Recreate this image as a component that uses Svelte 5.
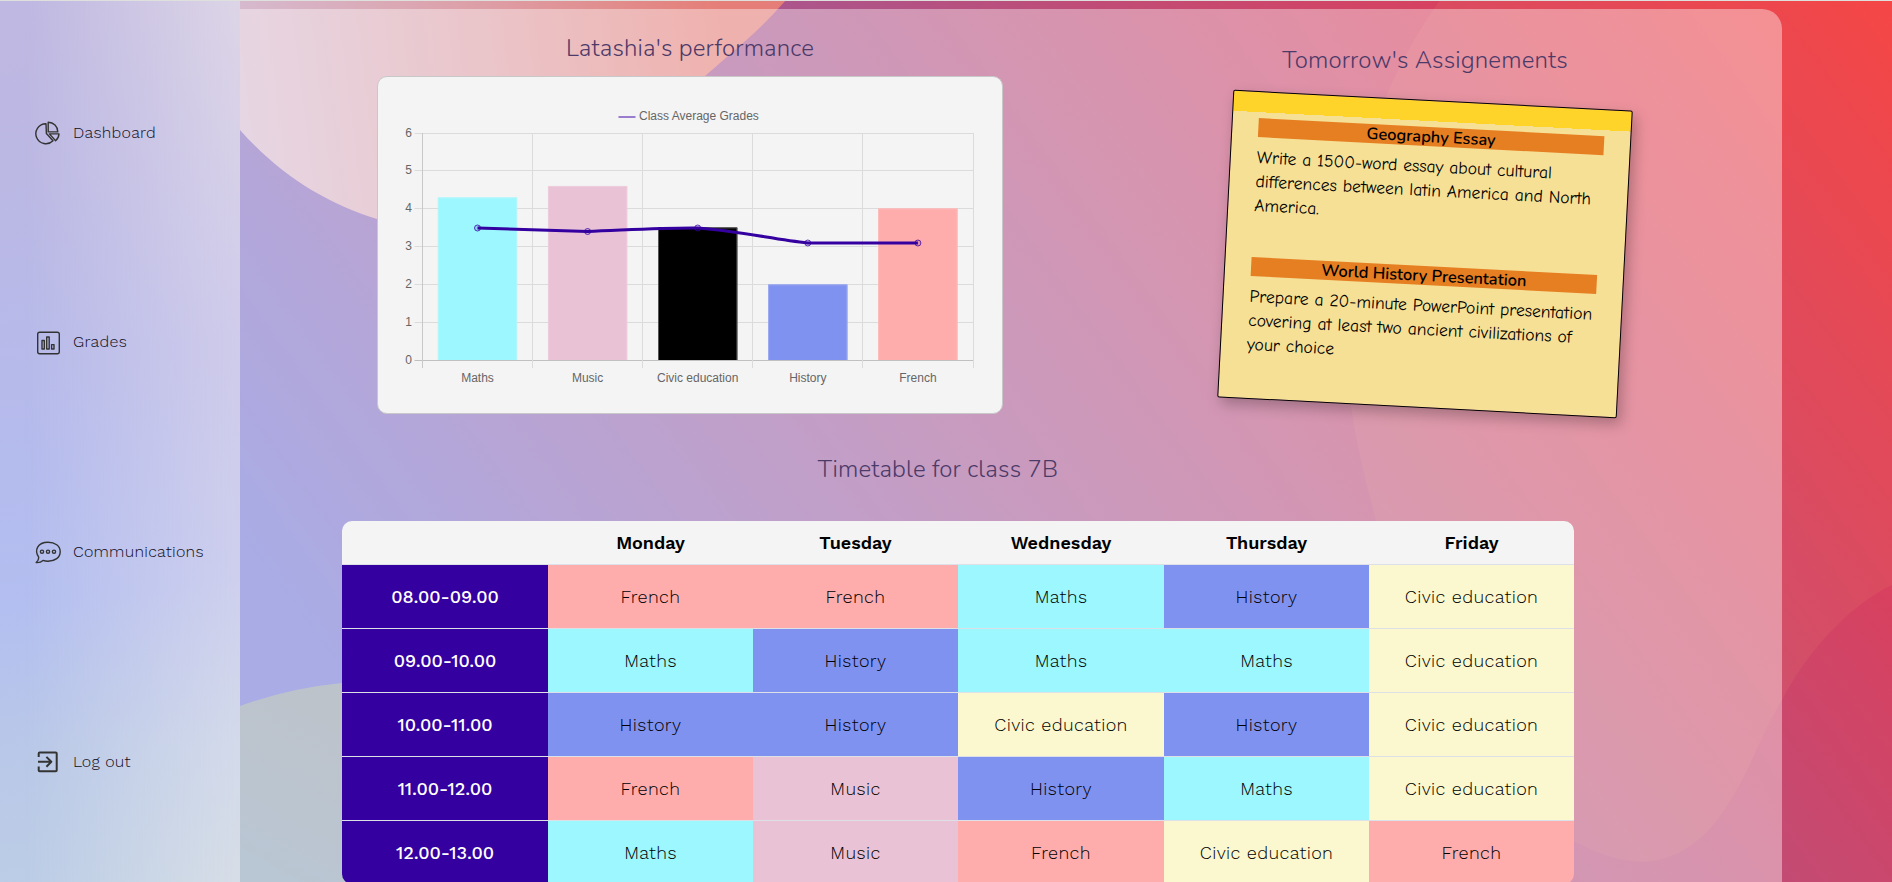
<script>
  const subjects = {
    F: ['French', 'french'],
    M: ['Maths', 'maths'],
    H: ['History', 'history'],
    C: ['Civic education', 'civic'],
    U: ['Music', 'music']
  };
  const days = ['Monday', 'Tuesday', 'Wednesday', 'Thursday', 'Friday'];
  const rows = [
    ['08.00-09.00', 'FFMHC'],
    ['09.00-10.00', 'MHMMC'],
    ['10.00-11.00', 'HHCHC'],
    ['11.00-12.00', 'FUHMC'],
    ['12.00-13.00', 'MUFCF']
  ];
  const menu = [
    ['pie', 'Dashboard'],
    ['bars', 'Grades'],
    ['chat', 'Communications'],
    ['exit', 'Log out']
  ];
  const gridY = [56.5, 93.5, 131.5, 169.5, 207.5, 245.5, 283.5];
  const gridX = [43.5, 153.5, 263.5, 373.5, 483.5, 594.5];
  const bars = [
    ['Maths', 120.5, '#9cf7ff', '#b5f5fb'],
    ['Music', 109, '#e9c3d5', '#edcedc'],
    ['Civic education', 150.5, '#000', '#555'],
    ['History', 207.5, '#8092f0', '#9ba9f1'],
    ['French', 131.5, '#ffacac', '#fcbcbc']
  ];
  const avg = [151, 154.5, 151, 166, 166];
  const cx = (i) => 98.5 + i * 110.1;
</script>

<div class="page">
  <svg class="backdrop" viewBox="0 0 1892 882" aria-hidden="true">
    <defs>
      <linearGradient id="base" gradientUnits="userSpaceOnUse" x1="-101" y1="74" x2="1229" y2="-903">
        <stop offset="0" stop-color="#7175d4" />
        <stop offset=".42" stop-color="#a75791" />
        <stop offset=".567" stop-color="#ba4f7c" />
        <stop offset=".785" stop-color="#d8415f" />
        <stop offset="1" stop-color="#f43c42" />
      </linearGradient>
      <linearGradient id="peach" gradientUnits="userSpaceOnUse" x1="240" y1="60" x2="720" y2="0">
        <stop offset="0" stop-color="#d6bacf" />
        <stop offset=".5" stop-color="#dd9fa7" />
        <stop offset="1" stop-color="#e57e78" />
      </linearGradient>
      <linearGradient id="moss" gradientUnits="userSpaceOnUse" x1="240" y1="882" x2="342" y2="700">
        <stop offset="0" stop-color="#8aa1b8" />
        <stop offset="1" stop-color="#929ba7" />
      </linearGradient>
    </defs>
    <rect width="1892" height="882" fill="url(#base)" />
    <path d="M1440 0C1380 85 1340 190 1345 345C1350 440 1375 520 1400 600C1440 730 1510 815 1574 841C1625 868 1665 872 1707 832C1745 790 1757 740 1782 700C1808 650 1850 605 1892 585V0Z" fill="#ffb070" fill-opacity=".09" />
    <path d="M0 0V60H200C213 93 225 113 240 130C280 175 325 203 377 219C500 255 600 190 705 76L743 43Q765 24 786 0Z" fill="url(#peach)" />
    <path d="M0 800L240 706Q290 688 342 683Q600 670 700 882H0Z" fill="url(#moss)" />
  </svg>

  <nav class="sidebar">
    {#each menu as [icon, label]}
      <a href="#{icon}" class="item">
        <svg class="icon" viewBox="0 0 28 28" width="28" height="28">
          {#if icon === 'pie'}
            <path d="M12 4.7A10 10 0 1 0 19 21.7L12.4 14.6Z" />
            <path d="M14.2 3.2V12.9H23.8A9.6 9.6 0 0 0 14.2 3.2Z" />
            <path d="M15.4 14.9H25Q24.8 19 21.6 21.7Z" />
          {:else if icon === 'bars'}
            <rect x="3.7" y="3.3" width="21.6" height="21.4" rx="2" />
            <rect x="8" y="11.5" width="2.3" height="8.5" />
            <rect x="12.7" y="8" width="2.5" height="12" />
            <rect x="17.6" y="15.6" width="2.4" height="4.4" />
          {:else if icon === 'chat'}
            <path d="M4.7 19.2C0 12.5 3.5 4.2 14 4.2C21 4.2 26.2 8 26.2 13.7S21 23.2 14 23.2Q11.2 23.2 9 22.4Q6.5 24.9 2.2 24.6Q4.9 22.2 4.7 19.2Z" />
            <circle cx="8" cy="13.7" r="1.6" />
            <circle cx="14" cy="13.7" r="1.6" />
            <circle cx="20" cy="13.7" r="1.6" />
          {:else}
            <g stroke-width="2">
              <path d="M4.7 9V5.6Q4.7 4.6 5.7 4.6H21.7Q22.7 4.6 22.7 5.6V22.2Q22.7 23.2 21.7 23.2H5.7Q4.7 23.2 4.7 22.2V18.4" />
              <path d="M4 13.8H17M12.4 8.9L17.3 13.8L12.4 18.7" />
            </g>
          {/if}
        </svg>
        <span>{label}</span>
      </a>
    {/each}
  </nav>

  <main class="panel">
    <div class="top">
      <section class="performance">
        <h2 class="h-perf">Latashia's performance</h2>
        <div class="card">
          <svg class="chart" viewBox="-1 0 624 336" width="624" height="336">
            {#each gridY as y, i}
              <line x1="35.5" x2="594" y1={y} y2={y} stroke={i === 6 ? '#c0c0c0' : '#dbdbdb'} />
              <text x="33" y={y + 3} text-anchor="end">{6 - i}</text>
            {/each}
            {#each gridX as x, i}
              <line x1={x} x2={x} y1="56" y2="291" stroke={i === 0 ? '#c8c8c8' : '#dbdbdb'} />
            {/each}
            {#each bars as [name, y, fill, edge], i}
              <rect x={cx(i) - 39.6} {y} width="79.2" height={283 - y} {fill} />
              <path d="M{cx(i) - 39.2} 283V{y + 0.4}H{cx(i) + 39.2}V283" fill="none" stroke={edge} />
              <text x={cx(i)} y="305" text-anchor="middle">{name}</text>
            {/each}
            <path d="M{cx(0)} 151L{cx(1)} 154.5C{cx(1) + 40} 153 {cx(2) - 35} 150.6 {cx(2)} 151C{cx(2) + 40} 154 {cx(3) - 35} 162 {cx(3)} 166L{cx(4)} 166" fill="none" stroke="#3400a0" stroke-width="3" />
            {#each avg as y, i}
              <circle cx={cx(i)} cy={y} r="3" fill="#3400a0" fill-opacity=".15" stroke="#3400a0" stroke-opacity=".75" />
            {/each}
            <line x1="239.5" x2="256.5" y1="40" y2="40" stroke="#9a7dcf" stroke-width="2" />
            <text x="260" y="43">Class Average Grades</text>
          </svg>
        </div>
      </section>

      <section class="assignments">
        <h2 class="h-assign">Tomorrow's Assignements</h2>
        <div class="note">
          <article>
            <h3>Geography Essay</h3>
            <p>Write a 1500-word essay about cultural<br />differences between latin America and North<br />America.</p>
          </article>
          <article>
            <h3>World History Presentation</h3>
            <p>Prepare a 20-minute PowerPoint presentation<br />covering at least two ancient civilizations of<br />your choice</p>
          </article>
        </div>
      </section>
    </div>

    <h2 class="h-table">Timetable for class 7B</h2>
    <div class="timetable">
      <div class="row head">
        <span></span>
        {#each days as day}<span>{day}</span>{/each}
      </div>
      {#each rows as [time, codes]}
        <div class="row">
          <span class="time">{time}</span>
          {#each codes.split('') as c}
            <span class={subjects[c][1]}>{subjects[c][0]}</span>
          {/each}
        </div>
      {/each}
    </div>
  </main>
</div>

<style>
  :global(body) { margin: 0; overflow: hidden; }
  .page {
    position: relative;
    display: flex;
    width: 1892px;
    height: 882px;
    box-sizing: border-box;
    overflow: hidden;
    border-top: 1px solid #dde0dd;
    font-family: 'Work Sans', Inter, sans-serif;
    color: #000;
  }
  .backdrop { position: absolute; left: 0; top: -1px; width: 1892px; height: 882px; }
  .sidebar {
    position: relative;
    flex: 0 0 240px;
    box-sizing: border-box;
    padding: 118px 0 0 34px;
    display: flex;
    flex-direction: column;
    gap: 181.7px;
    background: linear-gradient(173deg, #bfb8e2 0%, #bbb8e4 20%, #b4bbed 50%, #b3bff0 67%, #b9c8e8 83%, #bccee6 100%);
  }
  .sidebar::before {
    content: '';
    position: absolute;
    inset: 0;
    background: linear-gradient(176deg, #ddd5e6 0%, #cfcbea 40%, #cecfed 66%, #d3daea 85%, #d6dde6 100%);
    mask-image: linear-gradient(90deg, transparent 10%, #000 100%);
  }
  .item {
    position: relative;
    display: flex;
    align-items: center;
    height: 28px;
    gap: 11px;
    color: #100c18;
    text-decoration: none;
    font-size: 16px;
    font-weight: 340;
    letter-spacing: .25px;
  }
  .item span { padding-bottom: 2px; }
  .icon { flex: none; fill: none; stroke: #333; stroke-width: 1.4; stroke-linejoin: round; }
  .panel {
    position: relative;
    flex: 0 0 1542px;
    box-sizing: border-box;
    height: 900px;
    margin-top: 8px;
    background: rgba(255, 255, 255, .4);
    border-top-right-radius: 20px;
  }
  .top { display: flex; gap: 222px; padding-left: 137px; height: 406px; }
  .performance { width: 626px; }
  .assignments { width: 400px; }
  h2 {
    margin: 0;
    font: 320 24px/32px Nunito, 'Open Sans', sans-serif;
    letter-spacing: .15px;
    color: #4c3a69;
    text-align: center;
    white-space: nowrap;
  }
  .h-perf { padding: 23px 0 12px; }
  .h-assign { padding: 35px 0 24px; }
  .h-table { padding: 38px 40px 0 0; margin-left: 102px; width: 1192px; }
  .card { height: 336px; border: 1px solid #c8c8c8; border-radius: 10px; background: #f4f4f4; }
  .chart { display: block; font: 12px 'Liberation Sans', Arial, sans-serif; }
  .chart text { fill: #666; }
  .note {
    box-sizing: border-box;
    width: 400px;
    height: 308px;
    padding: 26px 26px 0;
    border: 1px solid #000;
    border-radius: 2px;
    background: linear-gradient(#fed42a 20px, #f6e096 20px);
    box-shadow: 4px 6px 14px rgba(0, 0, 0, .25);
    transform: rotate(3deg);
  }
  article { height: 139px; }
  h3 {
    margin: 0 0 8px;
    height: 19px;
    background: #e67e22;
    font: 600 16.4px/19px Nunito, 'Open Sans', sans-serif;
    text-align: center;
  }
  p { margin: 0; font: 400 17.6px/24px 'Comic Sans MS', 'Comic Neue', Lato, sans-serif; white-space: nowrap; }
  .timetable {
    width: 1232px;
    margin: 36px 0 0 102px;
    border-radius: 10px;
    overflow: hidden;
    font-size: 18px;
    font-weight: 330;
    letter-spacing: .38px;
  }
  .row { display: grid; grid-template-columns: 206px 205px 205px 206px 205px 205px; height: 63px; border-bottom: 1px solid #dde0e6; }
  .row:last-child { border-bottom: 0; }
  .row span { display: flex; align-items: center; justify-content: center; }
  .head { height: 43px; background: #f4f4f4; font-weight: 620; letter-spacing: 0; }
  .row .time { background: #3400a0; color: #fff; font-weight: 500; letter-spacing: -.05px; }
  .french { background: #ffacac; }
  .maths { background: #9cf7ff; }
  .history { background: #8092f0; }
  .civic { background: #fbf7ce; }
  .music { background: #e9c3d5; }
</style>
